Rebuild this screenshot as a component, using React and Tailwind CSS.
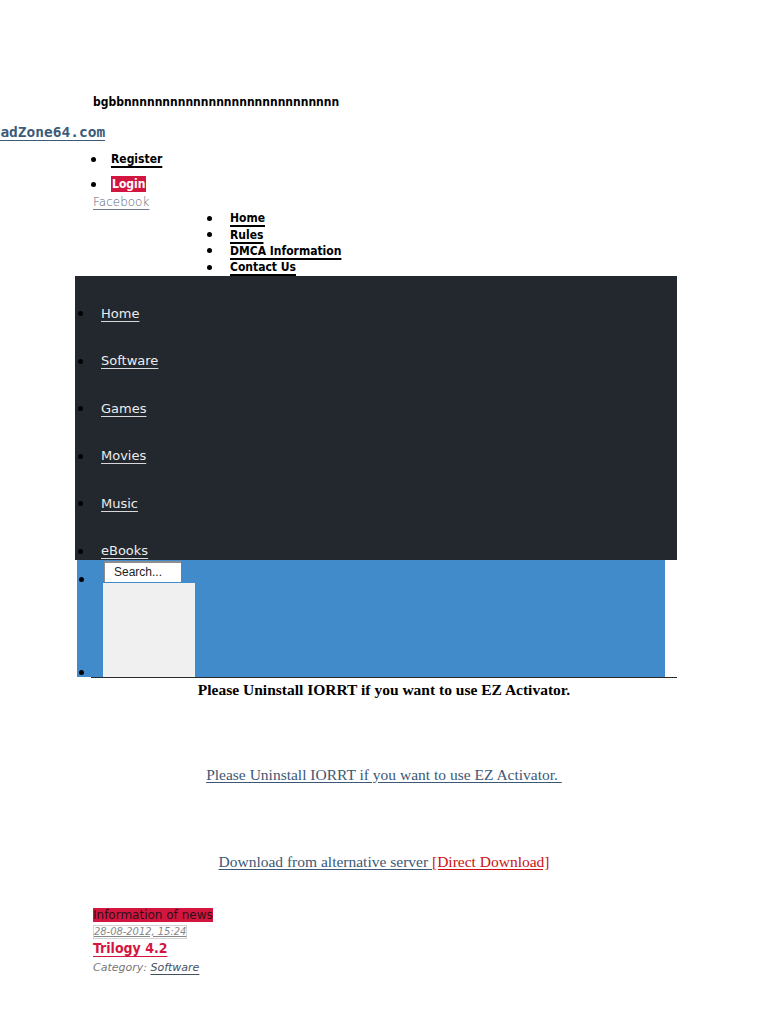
export default function App() {
  const nav = ['Home', 'Software', 'Games', 'Movies', 'Music', 'eBooks']
  const links = ['Home', 'Rules', 'DMCA Information', 'Contact Us']

  return (
    <div className="w-[768px] min-h-[1024px] overflow-hidden bg-white text-black">
      <div className="h-[95px]" />

      <div className="ml-[93px] h-[15px] leading-[15px] text-[12px] font-bold text-black" style={{ fontFamily: '"DejaVu Sans Condensed", "DejaVu Sans", sans-serif' }}>
        bgbbnnnnnnnnnnnnnnnnnnnnnnnnnnnn
      </div>

      <div className="mt-[12px] h-[18px] leading-[18px] whitespace-nowrap">
        <a href="#" className="ml-[-52px] text-[14.5px] font-bold text-[#3d5a78] underline underline-offset-[3px] decoration-[#3d5a78]" style={{ fontFamily: '"DejaVu Sans Mono", monospace' }}>
          DownloadZone64.com
        </a>
      </div>

      <ul className="mt-[11px] text-[12px] font-bold" style={{ fontFamily: '"DejaVu Sans Condensed", "DejaVu Sans", sans-serif' }}>
        <li className="flex items-center h-[16px] leading-[16px]">
          <span className="ml-[91px] w-[5px] h-[5px] rounded-full bg-black" />
          <a href="#" className="ml-[15px] text-black underline underline-offset-[3px] decoration-[1.5px]">Register</a>
        </li>
        <li className="flex items-center h-[16px] leading-[16px] mt-[9px]">
          <span className="ml-[91px] w-[5px] h-[5px] rounded-full bg-black" />
          <a href="#" className="ml-[15px] px-[1px] bg-[#d3163f] text-white">Login</a>
        </li>
      </ul>

      <div className="mt-[3px] ml-[93px] h-[14px] leading-[14px] text-[12px]" style={{ fontFamily: '"DejaVu Sans", sans-serif', fontWeight: 300 }}>
        <a href="#" className="text-[#55667a] underline underline-offset-[3px] decoration-[#6c7c8e]">Facebook</a>
      </div>

      <ul className="mt-[1px] text-[12px] font-bold" style={{ fontFamily: '"DejaVu Sans Condensed", "DejaVu Sans", sans-serif' }}>
        {links.map((l) => (
          <li key={l} className="flex items-center h-[16.4px] leading-[16px]">
            <span className="ml-[207px] w-[5px] h-[5px] rounded-full bg-black" />
            <a href="#" className="ml-[18px] text-black underline underline-offset-[3px] decoration-[1.5px]">{l}</a>
          </li>
        ))}
      </ul>

      <ul className="ml-[75px] w-[602px] h-[284px] bg-[#23282f] pt-[28px] text-[13px]" style={{ fontFamily: '"DejaVu Sans", sans-serif' }}>
        {nav.map((n) => (
          <li key={n} className="flex items-center h-[20px] mb-[27.5px]">
            <span className="ml-[3px] w-[5px] h-[5px] rounded-full bg-black" />
            <a href="#" className="ml-[18px] text-[#ececec] underline underline-offset-[3px] decoration-[#d8d8d8]">{n}</a>
          </li>
        ))}
      </ul>

      <div className="ml-[77px] w-[588px] h-[117px] bg-[#428bca] pt-[1px]">
        <div className="flex items-end h-[22px]">
          <span className="ml-[2px] mb-[1px] w-[5px] h-[5px] rounded-full bg-black" />
          <div className="ml-[20px] mb-[1px] w-[77px] h-[21px] bg-white border-t-2 border-l border-[#8d8d8d] pl-[9px] text-[12px] leading-[19px] text-[#222]" style={{ fontFamily: '"Liberation Sans", Arial, sans-serif' }}>
            Search...
          </div>
        </div>
        <div className="flex items-end h-[94px]">
          <span className="ml-[2px] mb-[2px] w-[5px] h-[5px] rounded-full bg-black" />
          <div className="ml-[19px] w-[92px] h-[94px] bg-[#f0f0f0]" />
        </div>
      </div>

      <div className="ml-[91px] w-[586px] border-t border-[#2a2a2a]" />

      <div style={{ fontFamily: '"Liberation Serif", "Times New Roman", serif' }} className="text-[15.5px]">
        <p className="mt-[2px] h-[20px] leading-[20px] text-center font-bold text-black">
          Please Uninstall IORRT if you want to use EZ Activator.
        </p>

        <p className="mt-[65px] h-[20px] leading-[20px] text-center">
          <a href="#" className="text-[#3d5875] underline underline-offset-[2px] whitespace-pre">Please Uninstall IORRT if you want to use EZ Activator. </a>
        </p>

        <p className="mt-[67px] h-[20px] leading-[20px] text-center">
          <a href="#" className="text-[#3d5875] underline underline-offset-[2px] whitespace-pre">Download from alternative server </a>
          <a href="#" className="text-[#cc1111] underline underline-offset-[2px]">[Direct Download]</a>
        </p>
      </div>

      <div className="ml-[93px]" style={{ fontFamily: '"DejaVu Sans", sans-serif' }}>
        <div className="mt-[35px] h-[14px] leading-[14px]">
          <span className="bg-[#d3163f] text-[#2e1018] text-[12px]">Information of news</span>
        </div>
        <div className="mt-[3px] h-[14px] leading-[12px]">
          <span className="inline-block border border-[#d4d4d4] text-[11px] italic text-[#888] underline underline-offset-[1px]" style={{ fontFamily: '"DejaVu Sans Condensed", "DejaVu Sans", sans-serif', fontWeight: 300 }}>28-08-2012, 15:24</span>
        </div>
        <div className="mt-[1px] h-[17px] leading-[17px]">
          <a href="#" className="text-[14px] font-bold text-[#d3163f] underline underline-offset-[3px]" style={{ fontFamily: '"DejaVu Sans Condensed", "DejaVu Sans", sans-serif' }}>Trilogy 4.2</a>
        </div>
        <div className="mt-[5px] h-[14px] leading-[14px] text-[11px] italic text-[#777]" style={{ fontWeight: 300 }}>
          Category: <a href="#" className="text-[#445060] underline underline-offset-[3px]">Software</a>
        </div>
      </div>
    </div>
  )
}
